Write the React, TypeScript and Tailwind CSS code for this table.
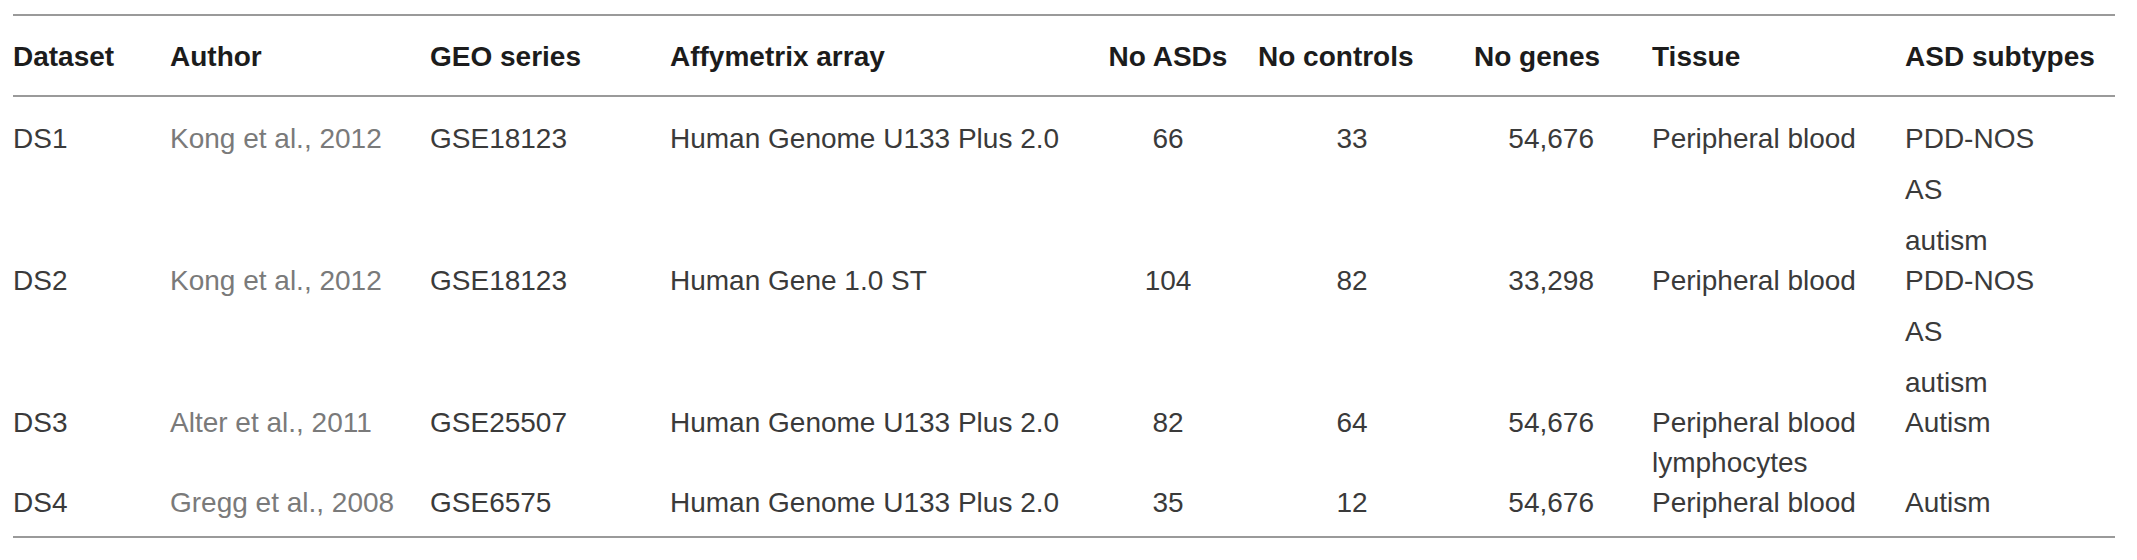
import React from "react";

type Row = {
  ds: string;
  author: string;
  geo: string;
  array: string;
  asd: string;
  ctrl: string;
  genes: string;
  tissue: string;
  subtypes: string[];
};

const rows: Row[] = [
  {
    ds: "DS1",
    author: "Kong et al., 2012",
    geo: "GSE18123",
    array: "Human Genome U133 Plus 2.0",
    asd: "66",
    ctrl: "33",
    genes: "54,676",
    tissue: "Peripheral blood",
    subtypes: ["PDD-NOS", "AS", "autism"],
  },
  {
    ds: "DS2",
    author: "Kong et al., 2012",
    geo: "GSE18123",
    array: "Human Gene 1.0 ST",
    asd: "104",
    ctrl: "82",
    genes: "33,298",
    tissue: "Peripheral blood",
    subtypes: ["PDD-NOS", "AS", "autism"],
  },
  {
    ds: "DS3",
    author: "Alter et al., 2011",
    geo: "GSE25507",
    array: "Human Genome U133 Plus 2.0",
    asd: "82",
    ctrl: "64",
    genes: "54,676",
    tissue: "Peripheral blood lymphocytes",
    subtypes: ["Autism"],
  },
  {
    ds: "DS4",
    author: "Gregg et al., 2008",
    geo: "GSE6575",
    array: "Human Genome U133 Plus 2.0",
    asd: "35",
    ctrl: "12",
    genes: "54,676",
    tissue: "Peripheral blood",
    subtypes: ["Autism"],
  },
];

const grid =
  "grid grid-cols-[157px_260px_240px_430px_136px_224px_192px_253px_210px]";

export default function App() {
  return (
    <div
      className="w-[2137px] h-[560px] bg-white pt-[14px] pl-[13px]"
      style={{ fontFamily: '"Liberation Sans", Arial, Helvetica, sans-serif' }}
    >
      <div className="w-[2102px] border-t-2 border-b-2 border-[#9a9a9a]">
        <div
          className={`${grid} border-b-2 border-[#9a9a9a] pt-[21px] pb-[18px] text-[28px] leading-[40px] font-bold text-[#1c1c1c]`}
        >
          <div>Dataset</div>
          <div>Author</div>
          <div>GEO series</div>
          <div>Affymetrix array</div>
          <div className="text-center">No ASDs</div>
          <div className="pl-[22px]">No controls</div>
          <div className="pl-[14px]">No genes</div>
          <div>Tissue</div>
          <div>ASD subtypes</div>
        </div>
        <div className="pt-[22px] pb-[13px] text-[28px] leading-[40px] text-[#3a3a3a]">
          {rows.map((r, i) => (
            <div key={i} className={`${grid} items-start`}>
              <div>{r.ds}</div>
              <div className="text-[#7a7a7a]">{r.author}</div>
              <div>{r.geo}</div>
              <div>{r.array}</div>
              <div className="text-center">{r.asd}</div>
              <div className="text-center pl-[8px]">{r.ctrl}</div>
              <div className="text-right pr-[58px]">{r.genes}</div>
              <div className="pr-[20px]">{r.tissue}</div>
              <div className="flex flex-col gap-[11px]">
                {r.subtypes.map((s, j) => (
                  <div key={j}>{s}</div>
                ))}
              </div>
            </div>
          ))}
        </div>
      </div>
    </div>
  );
}
